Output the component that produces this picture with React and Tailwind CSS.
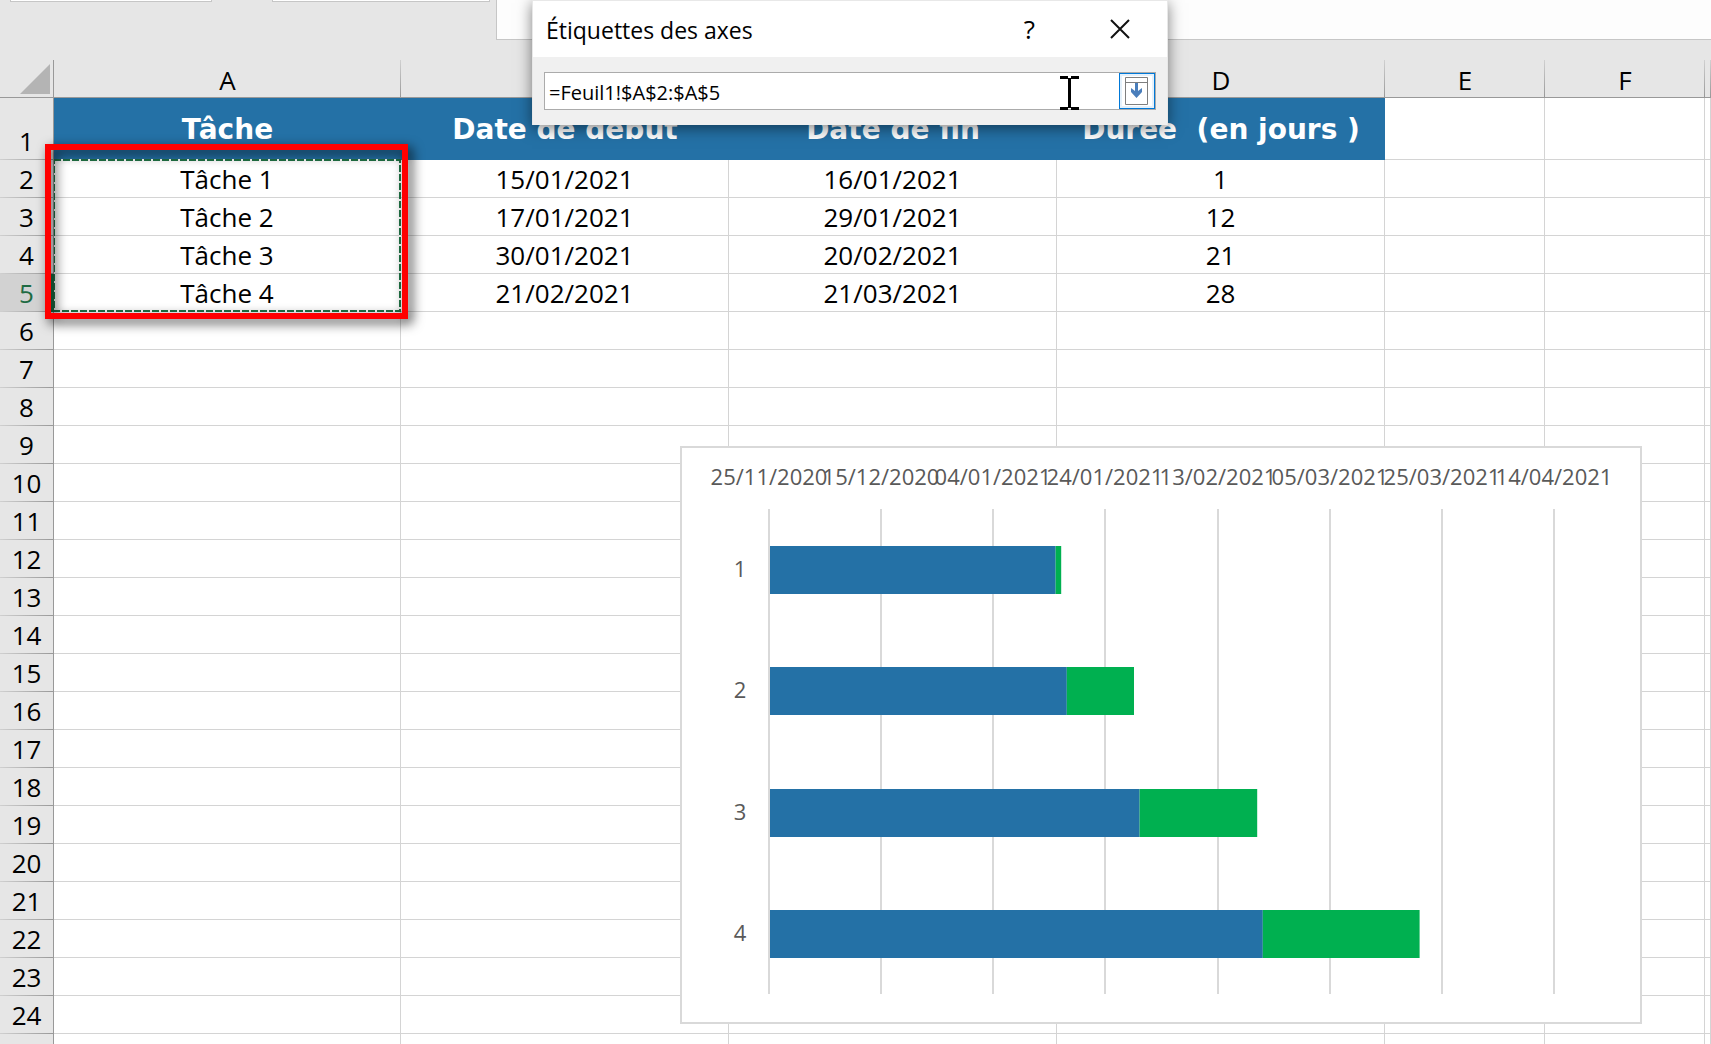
import { useState } from 'react'

const columns = ['A', 'B', 'C', 'D', 'E', 'F', '']

const headings = ['Tâche', 'Date de début', 'Date de fin', 'Durée  (en jours )']

const tasks = [
  { name: 'Tâche 1', start: '15/01/2021', end: '16/01/2021', offset: 51, days: 1 },
  { name: 'Tâche 2', start: '17/01/2021', end: '29/01/2021', offset: 53, days: 12 },
  { name: 'Tâche 3', start: '30/01/2021', end: '20/02/2021', offset: 66, days: 21 },
  { name: 'Tâche 4', start: '21/02/2021', end: '21/03/2021', offset: 88, days: 28 },
]

const axisDates = [
  '25/11/2020',
  '15/12/2020',
  '04/01/2021',
  '24/01/2021',
  '13/02/2021',
  '05/03/2021',
  '25/03/2021',
  '14/04/2021',
]

// rows 6 to 24, then one unnumbered row that runs off the bottom
const emptyRows = [...Array.from({ length: 19 }, (_, i) => i + 6), '']

function TopStrip() {
  return (
    <div className="flex h-[60px] items-start bg-[#e6e6e6]">
      <div className="ml-[10px] h-[2px] w-[202px] border-x border-b border-[#c6c6c6] bg-white" />
      <div className="ml-[60px] h-[2px] w-[218px] border-x border-b border-[#c6c6c6] bg-white" />
      <div className="ml-[6px] h-10 flex-1 border-b border-l border-[#c6c6c6] bg-[#fdfdfd]" />
    </div>
  )
}

function RowHeader({ number, active }) {
  return (
    <th
      scope="row"
      className={`border-r bg-[linear-gradient(to_right,#d0d0d0,#999999)] bg-[length:100%_1px] bg-bottom bg-no-repeat p-0 text-center align-bottom font-normal leading-[38px] ${
        active
          ? 'border-r-[#1e6b43] bg-[#d2d2d2] text-[#1e6b43] shadow-[inset_-2px_0_0_#1e6b43]'
          : 'border-r-[#999999] bg-[#e6e6e6]'
      }`}
    >
      {number}
    </th>
  )
}

function Cell({ children }) {
  return (
    <td className="border-b border-r border-[#d4d4d4] p-0 pt-0.5 text-center leading-[35px]">
      {children}
    </td>
  )
}

function Grid() {
  return (
    <table className="w-full table-fixed border-separate border-spacing-0 text-[26px] text-black">
      <colgroup>
        <col className="w-[54px]" />
        <col className="w-[347px]" />
        <col className="w-[328px]" />
        <col className="w-[328px]" />
        <col className="w-[328px]" />
        <col className="w-[160px]" />
        <col className="w-[160px]" />
        <col />
      </colgroup>
      <thead>
        <tr className="h-[38px]">
          <td className="border-b border-r border-[#999999] bg-[#e6e6e6] p-0">
            <svg className="mr-[3px] ml-auto block" width="30" height="30">
              <path d="M30 0V30H0Z" fill="#b4b4b4" />
            </svg>
          </td>
          {columns.map((column, i) => (
            <th
              key={i}
              scope="col"
              className="border-b border-[#999999] bg-[#e6e6e6] bg-[linear-gradient(to_bottom,#d0d0d0,#999999)] bg-[length:1px_100%] bg-right bg-no-repeat p-0 pt-[3px] text-center font-normal leading-[34px]"
            >
              {column}
            </th>
          ))}
        </tr>
      </thead>
      <tbody>
        <tr className="h-[62px]">
          <RowHeader number={1} />
          {headings.map((heading) => (
            <td
              key={heading}
              className="whitespace-pre bg-[#2471a6] p-0 text-center font-['DejaVu_Sans',sans-serif] text-[28px] font-bold leading-[37px] text-white"
            >
              {heading}
            </td>
          ))}
          <Cell />
          <Cell />
          <Cell />
        </tr>
        {tasks.map((task, i) => (
          <tr key={task.name} className="h-[38px]">
            <RowHeader number={i + 2} active={i === 3} />
            <Cell>{task.name}</Cell>
            <Cell>{task.start}</Cell>
            <Cell>{task.end}</Cell>
            <Cell>{task.days}</Cell>
            <Cell />
            <Cell />
            <Cell />
          </tr>
        ))}
        {emptyRows.map((number) => (
          <tr key={number} className="h-[38px]">
            <RowHeader number={number} />
            {columns.map((column) => (
              <Cell key={column} />
            ))}
          </tr>
        ))}
      </tbody>
    </table>
  )
}

function Selection() {
  return (
    <>
      <svg className="absolute left-[54px] top-[159px]" width="347" height="153">
        <path d="M0 1H346V152H0Z" fill="none" stroke="#ffffff" strokeWidth="2" />
        <path d="M0 1H346V152H0Z" fill="none" stroke="#217346" strokeWidth="2" strokeDasharray="7 2" />
      </svg>
      <div className="absolute left-[45px] top-[144px] h-[175px] w-[363px] border-6 border-[#ff0000] drop-shadow-[4px_4px_6px_rgba(0,0,0,0.8)]" />
    </>
  )
}

function GanttChart() {
  const left = 87
  const step = 112.15
  const perDay = 5.6
  const rowHeight = 121.25

  return (
    <div className="absolute left-[680px] top-[446px] border-2 border-[#d9d9d9] bg-white">
      <svg className="block text-[22px]" width="958" height="574" fill="#595959" textAnchor="middle">
        {axisDates.map((date, i) => {
          const x = Math.round(left + i * step)
          return (
            <g key={date}>
              <text x={x} y="37">
                {date}
              </text>
              <rect x={x - 1} y="61" width="2" height="485" fill="#d9d9d9" />
            </g>
          )
        })}
        {tasks.map((task, i) => {
          const y = Math.round(98 + i * rowHeight)
          const split = left + 1 + task.offset * perDay
          return (
            <g key={task.name}>
              <text x="58" y={y + 31}>
                {i + 1}
              </text>
              <rect x={left + 1} y={y} width={task.offset * perDay} height="48" fill="#2471a6" />
              <rect x={split} y={y} width={task.days * perDay} height="48" fill="#00b050" />
            </g>
          )
        })}
      </svg>
    </div>
  )
}

function AxisLabelsDialog() {
  const [range, setRange] = useState('=Feuil1!$A$2:$A$5')

  return (
    <div
      role="dialog"
      aria-labelledby="dialog-title"
      className="absolute left-[532px] top-0 w-[636px] border-x border-t border-[#e8e8e8] bg-[#f0f0f0] shadow-[0_3px_14px_rgba(0,0,0,0.5)]"
    >
      <div className="flex h-14 items-center bg-white pl-[13px] pr-[37px]">
        <h1 id="dialog-title" className="flex-1 pt-0.5 text-[23px] leading-8">
          Étiquettes des axes
        </h1>
        <button type="button" aria-label="Aide" className="mr-[75px] text-[26px] leading-8">
          ?
        </button>
        <button type="button" aria-label="Fermer">
          <svg width="20" height="20" stroke="#111111" strokeWidth="2">
            <path d="M1 1L19 19M19 1L1 19" />
          </svg>
        </button>
      </div>
      <div className="px-[11px] pb-[15px] pt-[15px]">
        <div className="flex h-[38px] border border-[#ababab] bg-white">
          <input
            type="text"
            aria-label="Plage d'étiquettes des axes"
            value={range}
            onChange={(e) => setRange(e.target.value)}
            className="min-w-0 flex-1 pl-1 pt-[3px] text-[20px] outline-none"
          />
          <button
            type="button"
            aria-label="Développer la boîte de dialogue"
            className="flex w-9 items-center justify-center border border-[#0078d7] bg-white shadow-[inset_0_0_0_2px_#e5f1fb]"
          >
            <svg width="24" height="28" fill="none">
              <path d="M.5 .5H22.500V27.500H.5ZM.5 5.500H22.500" stroke="#7f7f7f" />
              <path d="M10 6H13V14L17 11V15L11.500 21L6 15V11L10 14Z" fill="#4a7ebb" />
            </svg>
          </button>
        </div>
      </div>
      <svg className="absolute left-[527px] top-[75px]" width="20" height="34" stroke="#000000" fill="none">
        <path d="M0 1.500H8M11 1.500H19M0 32.500H8M11 32.500H19" strokeWidth="3" />
        <path d="M9.500 2V32" strokeWidth="3" />
      </svg>
    </div>
  )
}

function App() {
  return (
    <div className="relative h-screen overflow-hidden bg-white font-['Open_Sans','Noto_Sans',sans-serif] text-black">
      <TopStrip />
      <Grid />
      <Selection />
      <GanttChart />
      <AxisLabelsDialog />
    </div>
  )
}

export default App
